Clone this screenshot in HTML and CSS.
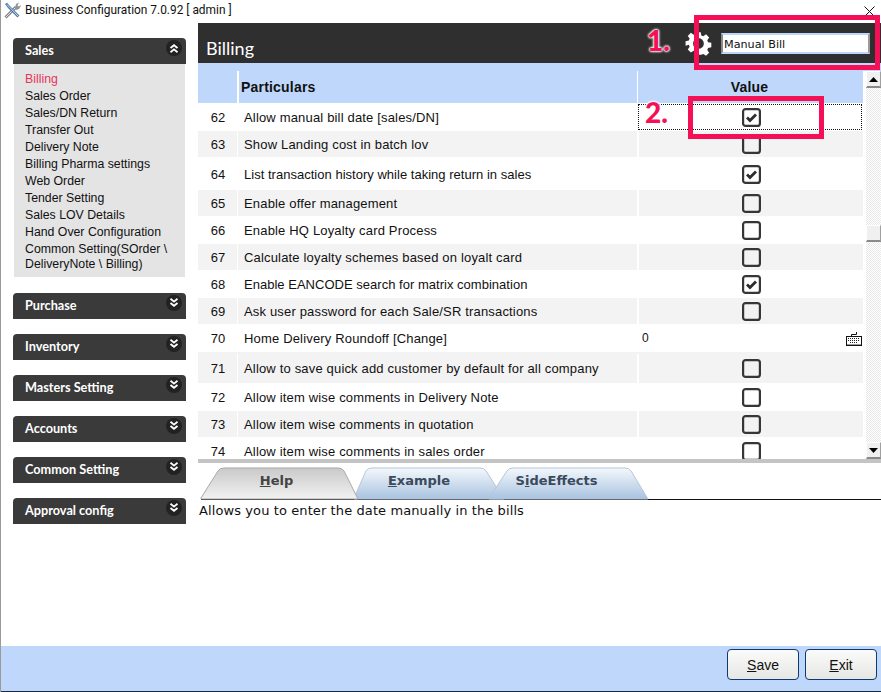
FILE: index.html
```html
<!DOCTYPE html>
<html lang="en">
<head>
<meta charset="utf-8">
<title>Business Configuration</title>
<link rel="stylesheet" href="styles.css">
</head>
<body>
<svg class="defs" width="0" height="0" aria-hidden="true">
  <defs>
    <symbol id="chev-down" viewBox="0 0 16 16">
      <circle cx="8" cy="8" r="8" fill="#222"/>
      <path d="M4.500 3.800 8 6.600l3.500-2.800M4.500 8 8 10.800 11.500 8" fill="none" stroke="#fff" stroke-width="1.800"/>
    </symbol>
    <symbol id="chev-up" viewBox="0 0 16 16">
      <circle cx="8" cy="8" r="8" fill="#222"/>
      <path d="M4.500 8 8 5.200 11.500 8M4.500 12.200 8 9.400l3.500 2.800" fill="none" stroke="#fff" stroke-width="1.800"/>
    </symbol>
    <symbol id="box" viewBox="0 0 19 19">
      <rect x="1.100" y="1.100" width="16.800" height="16.800" rx="2.500" fill="none" stroke="#363636" stroke-width="2.200"/>
    </symbol>
    <symbol id="box-on" viewBox="0 0 19 19">
      <rect x="1.100" y="1.100" width="16.800" height="16.800" rx="2.500" fill="none" stroke="#363636" stroke-width="2.200"/>
      <path d="M5 9.500 8 12.500 14 6.500" fill="none" stroke="#2c2c2c" stroke-width="2.800"/>
    </symbol>
    <linearGradient id="tab-grey" x1="0" y1="0" x2="0" y2="1">
      <stop offset="0" stop-color="#c9c9c9"/>
      <stop offset="1" stop-color="#f2f2f2"/>
    </linearGradient>
    <linearGradient id="tab-blue" x1="0" y1="0" x2="0" y2="1">
      <stop offset="0" stop-color="#f4f8fc"/>
      <stop offset="1" stop-color="#a9c3e0"/>
    </linearGradient>
  </defs>
</svg>
<div class="window">
  <header class="titlebar">
    <svg class="app-icon" width="17" height="17" viewBox="0 0 17 17">
      <path d="M1.500 15.500 12 5" stroke="#7d8288" stroke-width="3"/>
      <path d="M1.500 15.500 12 5" stroke="#e4e6e8" stroke-width="1"/>
      <path d="M11 6l1-4 3-1.500-1.500 3 1 1 3-1.500L15 7l-3 1z" fill="#8f9499"/>
      <path d="M1 2 3 .8 6 4l9.500 9.500-2 2L4 6z" fill="#4f79a8"/>
      <path d="M3 2.500 14.500 14.500" stroke="#cfdbe8" stroke-width="1"/>
    </svg>
    <span class="title">Business Configuration 7.0.92 [ admin ]</span>
    <svg class="close" width="11" height="11" viewBox="0 0 11 11"><path d="M.5.500l10 10M10.500.500l-10 10" stroke="#111" stroke-width="1"/></svg>
  </header>

  <div class="middle">
    <nav class="sidebar">
      <section class="group group-open">
        <div class="group-head"><span>Sales</span><svg class="chev"><use href="#chev-up"/></svg></div>
        <ul class="group-list">
          <li class="active">Billing</li>
          <li>Sales Order</li>
          <li>Sales/DN Return</li>
          <li>Transfer Out</li>
          <li>Delivery Note</li>
          <li>Billing Pharma settings</li>
          <li>Web Order</li>
          <li>Tender Setting</li>
          <li>Sales LOV Details</li>
          <li>Hand Over Configuration</li>
          <li class="multi">Common Setting(SOrder \ DeliveryNote \ Billing)</li>
        </ul>
      </section>
      <section class="group"><div class="group-head"><span>Purchase</span><svg class="chev"><use href="#chev-down"/></svg></div></section>
      <section class="group"><div class="group-head"><span>Inventory</span><svg class="chev"><use href="#chev-down"/></svg></div></section>
      <section class="group"><div class="group-head"><span>Masters Setting</span><svg class="chev"><use href="#chev-down"/></svg></div></section>
      <section class="group"><div class="group-head"><span>Accounts</span><svg class="chev"><use href="#chev-down"/></svg></div></section>
      <section class="group"><div class="group-head"><span>Common Setting</span><svg class="chev"><use href="#chev-down"/></svg></div></section>
      <section class="group"><div class="group-head"><span>Approval config</span><svg class="chev"><use href="#chev-down"/></svg></div></section>
    </nav>

    <main class="main">
      <div class="page-head">
        <h1 class="page-title">Billing</h1>
        <svg class="gear" width="27" height="27" viewBox="0 0 27 27">
          <path fill="#fff" fill-rule="evenodd" d="M11 1h5l.7 3.600 2.200.9 3-2.100 3.500 3.500-2.100 3 .9 2.200 3.600.7v5l-3.600.7-.9 2.200 2.100 3-3.500 3.500-3-2.100-2.200.9L16 26h-5l-.7-3.600-2.200-.9-3 2.100-3.500-3.500 2.100-3-.9-2.200L-.8 16v-5l3.600-.7.9-2.200-2.100-3 3.500-3.500 3 2.100 2.200-.9zM13.500 7.500a6 6 0 1 0 0 12 6 6 0 0 0 0-12z" transform="translate(1.300 1.300) scale(.9)"/>
        </svg>
        <input class="search" type="text" value="Manual Bill">
      </div>

      <div class="table-top"></div>
      <div class="table-area">
        <div class="table">
          <div class="thead">
            <div class="th th-no"></div>
            <div class="th th-name">Particulars</div>
            <div class="th th-val">Value</div>
          </div>
          <div class="tbody">
            <div class="row"><div class="no">62</div><div class="name">Allow manual bill date [sales/DN]</div><div class="val focus"><svg class="cb"><use href="#box-on"/></svg></div></div>
            <div class="row alt"><div class="no">63</div><div class="name">Show Landing cost in batch lov</div><div class="val"><svg class="cb"><use href="#box"/></svg></div></div>
            <div class="row tall-white"><div class="no">64</div><div class="name tight">List transaction history while taking return in sales</div><div class="val"><svg class="cb"><use href="#box-on"/></svg></div></div>
            <div class="row alt"><div class="no">65</div><div class="name">Enable offer management</div><div class="val"><svg class="cb"><use href="#box"/></svg></div></div>
            <div class="row"><div class="no">66</div><div class="name">Enable HQ Loyalty card Process</div><div class="val"><svg class="cb"><use href="#box"/></svg></div></div>
            <div class="row alt"><div class="no">67</div><div class="name">Calculate loyalty schemes based on loyalt card</div><div class="val"><svg class="cb"><use href="#box"/></svg></div></div>
            <div class="row"><div class="no">68</div><div class="name tight">Enable EANCODE search for matrix combination</div><div class="val"><svg class="cb"><use href="#box-on"/></svg></div></div>
            <div class="row alt"><div class="no">69</div><div class="name">Ask user password for each Sale/SR transactions</div><div class="val"><svg class="cb"><use href="#box"/></svg></div></div>
            <div class="row"><div class="no">70</div><div class="name">Home Delivery Roundoff [Change]</div><div class="val val-text"><span>0</span>
              <svg class="kbd" width="16" height="14" viewBox="0 0 16 14"><path d="M10.500 0v2.500H5.500v2" fill="none" stroke="#111"/><rect x=".5" y="4.500" width="15" height="9" fill="#fff" stroke="#111"/><path d="M2 6.500h12M2 8.500h12M4 10.500h8" stroke="#222" stroke-width="1" stroke-dasharray="1 1"/><path d="M1 12.500h14" stroke="#999"/></svg>
            </div></div>
            <div class="row alt tall-alt"><div class="no">71</div><div class="name">Allow to save quick add customer by default for all company</div><div class="val"><svg class="cb"><use href="#box"/></svg></div></div>
            <div class="row"><div class="no">72</div><div class="name">Allow item wise comments in Delivery Note</div><div class="val"><svg class="cb"><use href="#box"/></svg></div></div>
            <div class="row alt"><div class="no">73</div><div class="name">Allow item wise comments in quotation</div><div class="val"><svg class="cb"><use href="#box"/></svg></div></div>
            <div class="row"><div class="no">74</div><div class="name">Allow item wise comments in sales order</div><div class="val"><svg class="cb"><use href="#box"/></svg></div></div>
          </div>
        </div>
        <div class="scrollbar">
          <div class="sb-btn"><svg width="9" height="5" viewBox="0 0 9 5"><path d="M4.500 0 9 5H0z" fill="#000"/></svg></div>
          <div class="sb-track"><div class="sb-thumb"></div></div>
          <div class="sb-btn"><svg width="9" height="5" viewBox="0 0 9 5"><path d="M0 0h9L4.500 5z" fill="#000"/></svg></div>
        </div>
      </div>
      <div class="divider"></div>

      <div class="tabs">
        <div class="tab tab-help">
          <svg class="tab-bg" viewBox="0 0 158 33" preserveAspectRatio="none"><path d="M0 32 17 4Q19 1 23 1H137Q141 1 143 4L157 33H0z" fill="url(#tab-grey)" stroke="#a8a8a8"/></svg>
          <span class="tab-label"><u>H</u>elp</span>
        </div>
        <div class="tab tab-example">
          <svg class="tab-bg" viewBox="0 0 150 33" preserveAspectRatio="none"><path d="M0 32 12 4Q14 1 18 1H126Q130 1 132 4L150 33H0z" fill="url(#tab-blue)" stroke="#b5c5d8"/></svg>
          <span class="tab-label"><u>E</u>xample</span>
        </div>
        <div class="tab tab-side">
          <svg class="tab-bg" viewBox="0 0 160 33" preserveAspectRatio="none"><path d="M0 32 18 4Q20 1 24 1H136Q140 1 142 4L159 33H0z" fill="url(#tab-blue)" stroke="#b5c5d8"/></svg>
          <span class="tab-label">S<u>i</u>deEffects</span>
        </div>
      </div>
      <p class="help-text">Allows you to enter the date manually in the bills</p>
    </main>
  </div>

  <footer class="footer">
    <button class="btn btn-save" type="button"><u>S</u>ave</button>
    <button class="btn btn-exit" type="button"><u>E</u>xit</button>
  </footer>

  <div class="mark mark-search"></div>
  <div class="mark mark-check"></div>
  <span class="step step-one">1.</span>
  <span class="step step-two">2.</span>
</div>
</body>
</html>
```

FILE: styles.css
```css
* { box-sizing: border-box; }
html, body { margin: 0; padding: 0; height: 100%; }
body { background: #fff; overflow: hidden; font-family: "Liberation Sans", Arial, sans-serif; color: #111; }
.defs { position: absolute; }

.window { position: relative; width: 881px; height: 692px; display: flex; flex-direction: column; border-left: 1px solid #9a9a9a; }

.titlebar { height: 23px; flex: none; display: flex; align-items: center; padding: 0 6px 3px 3px; gap: 4px; }
.title { font: 11.9px "Roboto", sans-serif; color: #111; flex: 1; }
.close { margin-top: 2px; }

.middle { flex: 1; display: flex; min-height: 0; }

.sidebar { width: 197px; flex: none; padding: 15px 0 0 12px; display: flex; flex-direction: column; gap: 15px; }
.group { width: 173px; }
.group-open { margin-bottom: 1px; }
.group-head { height: 26px; background: #3a3a3a; border-radius: 4px 4px 0 0; display: flex; justify-content: space-between; padding: 3px 4px 0 12px; color: #fff; font: 700 12.7px/18px "Lato", sans-serif; }
.chev { width: 16px; height: 16px; margin-top: -1px; }
.group-list { list-style: none; margin: 0 1px; padding: 7px 11px 5px; background: #e4e4e4; font-size: 12.3px; line-height: 17px; color: #111; }
.group-list .active { color: #e8345a; }
.group-list .multi { line-height: 15px; padding-top: 1px; }

.main { flex: 1; display: flex; flex-direction: column; min-width: 0; }
.page-head { height: 40px; flex: none; background: #2f2f2f; display: flex; align-items: center; padding: 0 11px 0 8px; }
.page-title { flex: 1; margin: 0; font: 400 18px/22px "Lato", sans-serif; color: #fff; padding-top: 10px; }
.gear { margin-right: 9px; }
.search { width: 149px; height: 21px; padding: 2px 1px 0; font: 11.2px "DejaVu Sans", sans-serif; color: #111; background: #fff; border: 2px solid #bcd5f9; border-left-color: #8a8a8a; border-right-color: #9a9a9a; outline: none; }

.table-top { height: 8px; flex: none; background: #bfd7fb; }
.table-area { height: 388px; flex: none; display: flex; }
.table { width: 665px; flex: none; height: 388px; overflow: hidden; }
.thead { display: flex; height: 32px; background: #bfd7fb; font-weight: 700; font-size: 14px; letter-spacing: .2px; }
.th { display: flex; align-items: center; }
.th-no { width: 39px; }
.th-name { width: 400px; border-left: 2px solid #fff; padding-left: 2px; }
.th-val { flex: 1; border-left: 1px solid #fff; justify-content: center; padding-right: 2px; }
.tbody { display: flex; flex-direction: column; }
.row { height: 28px; flex: none; display: flex; align-items: center; font-size: 13px; background: #fff; }
.row.alt { height: 26px; background: #f3f3f3; }
.row.tall-white { height: 33px; padding-top: 1px; }
.row.alt.tall-alt { height: 31px; padding-top: 2px; }
.no { width: 39px; align-self: stretch; display: flex; align-items: center; justify-content: center; padding-left: 1px; }
.name { width: 400px; align-self: stretch; display: flex; align-items: center; padding-left: 6px; border-left: 1px solid #fff; letter-spacing: .17px; }
.name.tight { letter-spacing: .02px; }
.val { flex: 1; align-self: stretch; display: flex; align-items: center; justify-content: center; border-left: 2px solid #fff; }
.val.focus { outline: 1px dotted #111; outline-offset: -2px; }
.val-text { justify-content: space-between; padding: 0 1px 0 3px; font-size: 12px; }
.cb { width: 19px; height: 19px; }
.kbd { margin-top: 2px; }

.scrollbar { width: 15px; margin-left: 3px; flex: none; display: flex; flex-direction: column; background-color: #fff; background-image: repeating-conic-gradient(#e8e8e8 0 25%, #fff 0 50%); background-size: 2px 2px; }
.sb-btn { height: 17px; flex: none; background: #f0f0f0; border: 1px solid #fff; border-right-color: #a0a0a0; border-bottom: 2px solid #8a8a8a; display: flex; align-items: center; justify-content: center; }
.sb-track { flex: 1; padding-top: 137px; }
.sb-thumb { height: 17px; background: #f0f0f0; border: 1px solid #fff; border-right-color: #a0a0a0; border-bottom: 2px solid #8a8a8a; }

.divider { height: 4px; flex: none; background: #c4c4c4; }

.tabs { position: relative; height: 37px; flex: none; display: flex; align-items: flex-end; margin-left: 3px; border-bottom: 1px solid #111; padding-top: 4px; }
.tab { position: relative; height: 32px; display: flex; justify-content: center; padding-top: 6px; font: 700 13px/16px "DejaVu Sans", sans-serif; }
.tab-bg { position: absolute; inset: 0; width: 100%; height: 100%; overflow: visible; }
.tab-label { position: relative; }
.tab-help { width: 158px; z-index: 3; color: #444; padding-right: 7px; }
.tab-example { width: 150px; margin-left: -5px; z-index: 1; color: #3b4a5c; padding-right: 20px; }
.tab-side { width: 160px; margin-left: -15px; z-index: 2; color: #3b4a5c; padding-right: 25px; }

.help-text { margin: 3px 0 0 1px; font: 13px/16px "DejaVu Sans", sans-serif; letter-spacing: .1px; color: #111; }

.footer { height: 46px; flex: none; background: #bfd7fb; border-bottom: 1px solid #1c2b3c; display: flex; justify-content: flex-end; align-items: flex-start; gap: 6px; padding: 3px 4px 0 0; }
.btn { width: 72px; height: 31px; padding: 0; font: 14px "Liberation Sans", sans-serif; color: #111; border: 1px solid #0d3b70; border-radius: 4px; background: linear-gradient(#fbfbfb, #e6e6e3); }

.mark { position: absolute; border: 5px solid #f50f57; pointer-events: none; }
.mark-search { left: 693px; top: 15px; width: 186px; height: 55px; }
.mark-check { left: 687px; top: 96px; width: 136px; height: 43px; }
.step { position: absolute; font: 900 28px/32px "Lato", sans-serif; color: #f50f57; text-shadow: 0 0 3px #fff, 0 0 3px #fff, 0 0 2px #fff, 0 0 2px #fff; }
.step-one { left: 646px; top: 24px; }
.step-two { left: 644px; top: 96px; }
```
